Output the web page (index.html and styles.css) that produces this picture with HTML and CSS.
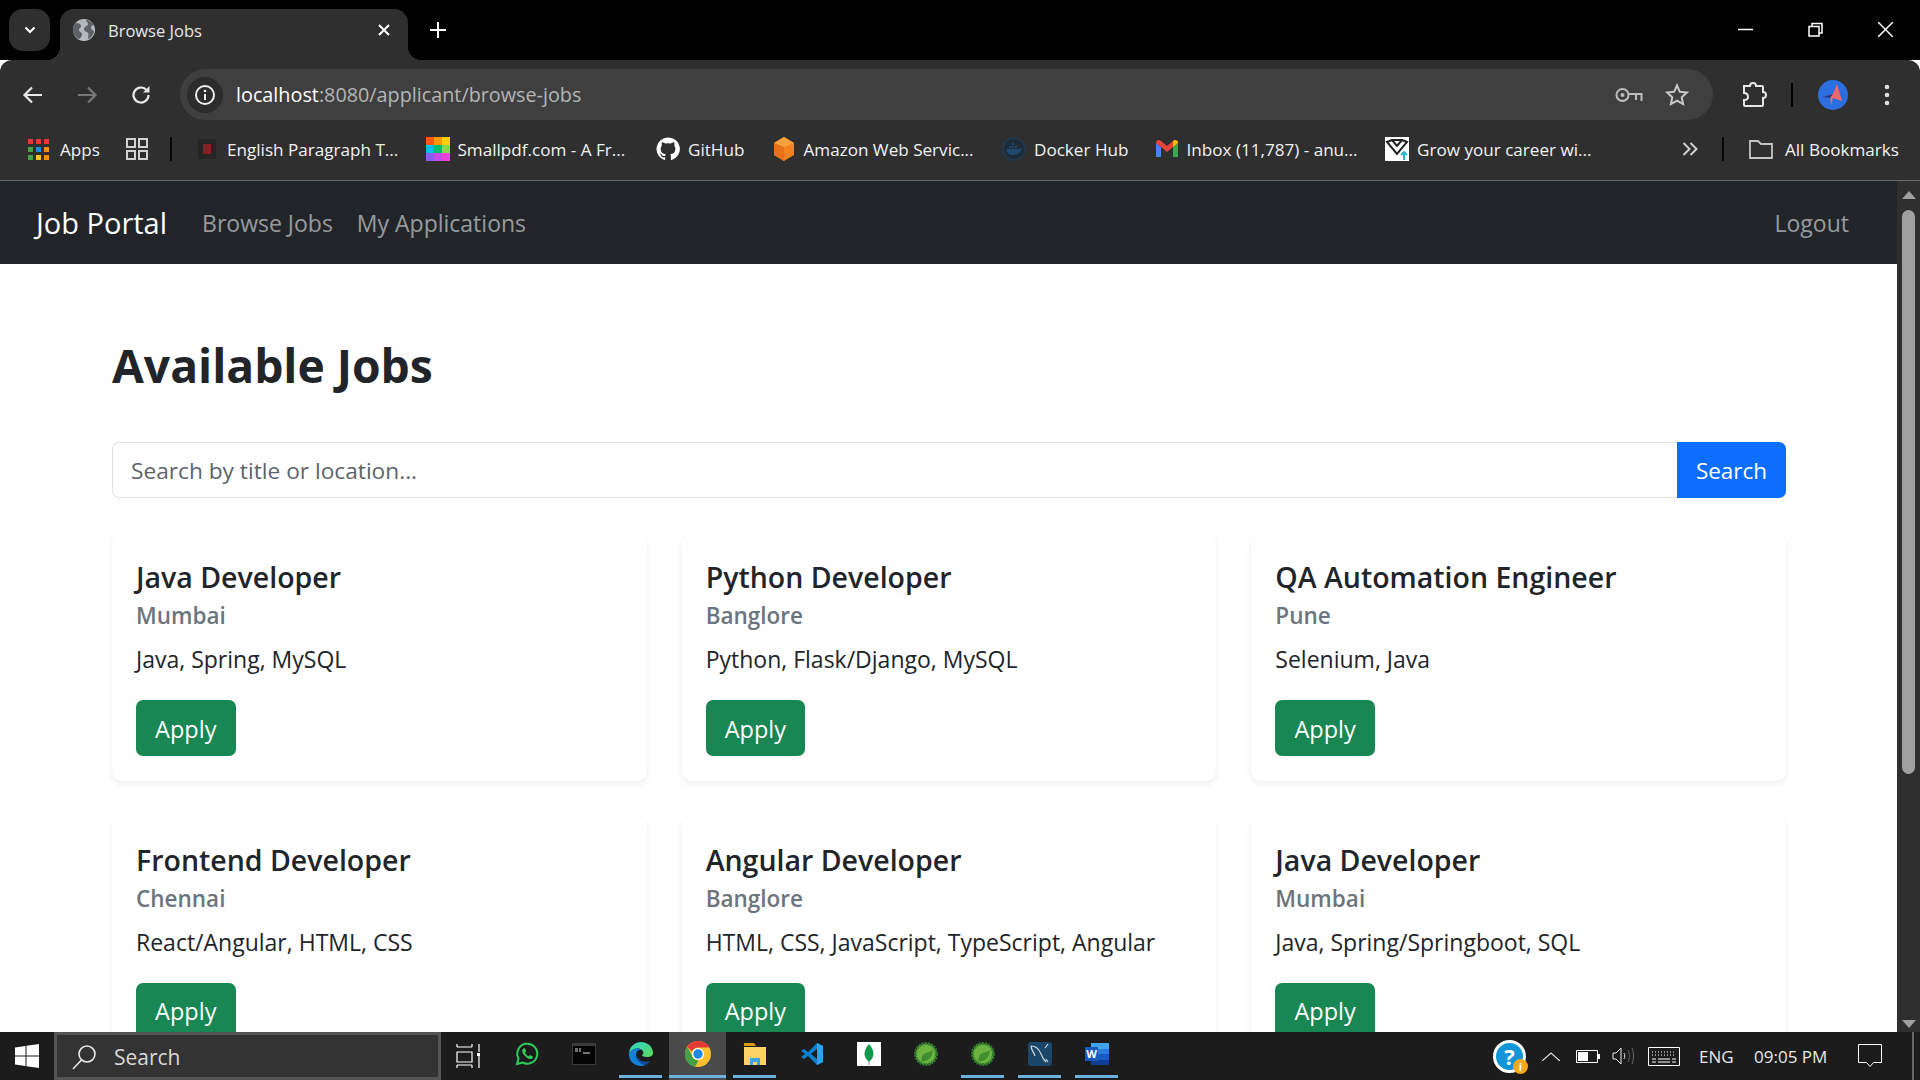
FILE: index.html
```html
<!DOCTYPE html>
<html lang="en">
<head>
<meta charset="utf-8">
<title>Browse Jobs</title>
<link rel="stylesheet" href="styles.css">
</head>
<body>
<header class="titlebar">
  <div class="tab-menu"><svg width="14" height="14" viewBox="0 0 14 14"><path d="M2.5 4.5 7 9l4.500-4.500" fill="none" stroke="#fff" stroke-width="2"/></svg></div>
  <div class="tab">
    <svg width="22" height="22" viewBox="0 0 22 22"><circle cx="11" cy="11" r="11" fill="#b5b8bc"/><path d="M3 4c3 0 5 1 5 3s-2 2-2 4 3 2 3 4-1 4-3 5C2 18 0 14 0 11c0-3 1-5 3-7zM13 1c3 0 6 2 8 5-2 0-3 1-3 3s3 2 3 4c-1 3-3 6-6 7 0-3 1-4 0-6-1-2-4-1-4-4s4-3 4-5-2-2-2-4z" fill="#5d6166"/></svg>
    <span class="tab-title">Browse Jobs</span>
    <svg class="tab-close" width="14" height="14" viewBox="0 0 14 14"><path d="M2 2l10 10M12 2 2 12" stroke="#fff" stroke-width="2"/></svg>
  </div>
  <svg class="new-tab" width="18" height="18" viewBox="0 0 18 18"><path d="M9 1v16M1 9h16" stroke="#fff" stroke-width="2"/></svg>
  <div class="win-controls">
    <svg width="15" height="15" viewBox="0 0 15 15"><path d="M0 7.500h15" stroke="#fff" stroke-width="1.500"/></svg>
    <svg width="15" height="15" viewBox="0 0 15 15"><path d="M1 4.500h10v9.500H1zM4 4.500V1.500h10v9.500h-3" fill="none" stroke="#fff" stroke-width="1.500"/></svg>
    <svg width="15" height="15" viewBox="0 0 15 15"><path d="M0 0l15 15M15 0 0 15" stroke="#fff" stroke-width="1.500"/></svg>
  </div>
</header>

<div class="toolbar">
  <svg class="nav-icon" width="24" height="24" viewBox="0 0 24 24"><path d="M21 12H4M11 4.500 3.500 12l7.500 7.500" fill="none" stroke="#e8e8e8" stroke-width="2.200"/></svg>
  <svg class="nav-icon" width="24" height="24" viewBox="0 0 24 24"><path d="M3 12h17M13 4.500l7.500 7.500-7.500 7.500" fill="none" stroke="#777" stroke-width="2.200"/></svg>
  <svg class="nav-icon" width="24" height="24" viewBox="0 0 24 24"><path d="M19.500 12a7.500 7.500 0 1 1-2.400-5.500" fill="none" stroke="#e8e8e8" stroke-width="2.200"/><path d="M20.500 3v6.500H14z" fill="#e8e8e8"/></svg>
  <div class="omnibox">
    <div class="info-chip"><svg width="22" height="22" viewBox="0 0 22 22"><circle cx="11" cy="11" r="9" fill="none" stroke="#eee" stroke-width="2"/><path d="M11 10v6" stroke="#eee" stroke-width="2"/><circle cx="11" cy="7" r="1.300" fill="#eee"/></svg></div>
    <div class="url"><span class="url-host">localhost</span>:8080/applicant/browse-jobs</div>
    <svg class="omni-key" width="28" height="16" viewBox="0 0 28 16"><circle cx="7.500" cy="8" r="6" fill="none" stroke="#bdbdbd" stroke-width="2"/><circle cx="7.500" cy="8" r="2" fill="#bdbdbd"/><path d="M13 7h13.500v7M21 8v5" fill="none" stroke="#bdbdbd" stroke-width="2"/></svg>
    <svg class="omni-star" width="24" height="24" viewBox="0 0 24 24"><path d="M12 2.500l2.900 6.300 6.900.8-5.100 4.700 1.400 6.800-6.100-3.500-6.100 3.500 1.400-6.800-5.100-4.700 6.900-.8z" fill="none" stroke="#c8c8c8" stroke-width="2"/></svg>
  </div>
  <svg class="puzzle" width="26" height="26" viewBox="0 0 26 26"><path d="M3 4h6c0-4 6-4 6 0h6a1 1 0 0 1 1 1v5c4 0 4 6 0 6v7a1 1 0 0 1-1 1H4a1 1 0 0 1-1-1v-5c3 0 4-1 4-3s-1-4-4-4z" fill="none" stroke="#e4e4e4" stroke-width="2"/></svg>
  <span class="tool-divider"></span>
  <svg class="avatar" width="30" height="30" viewBox="0 0 30 30"><circle cx="15" cy="15" r="15" fill="#2c6fe0"/><path d="M4 17l11-3 4-10 5 17-9-3-2 7-1-8z" fill="#f0696c"/><path d="M4 17l11-3-3 4z" fill="#1c3e94"/></svg>
  <svg class="kebab" width="6" height="22" viewBox="0 0 6 22"><circle cx="3" cy="3" r="2.300" fill="#ddd"/><circle cx="3" cy="11" r="2.300" fill="#ddd"/><circle cx="3" cy="19" r="2.300" fill="#ddd"/></svg>
</div>

<nav class="bookmarks">
  <svg width="21" height="21" viewBox="0 0 21 21"><g><rect width="5" height="5" fill="#e53935"/><rect x="8" width="5" height="5" fill="#e53935"/><rect x="16" width="5" height="5" fill="#e53935"/><rect y="8" width="5" height="5" fill="#43a047"/><rect x="8" y="8" width="5" height="5" fill="#1e88e5"/><rect x="16" y="8" width="5" height="5" fill="#fb8c00"/><rect y="16" width="5" height="5" fill="#43a047"/><rect x="8" y="16" width="5" height="5" fill="#fbc02d"/><rect x="16" y="16" width="5" height="5" fill="#fb8c00"/></g></svg>
  <span class="bm-apps">Apps</span>
  <svg class="bm-groups" width="22" height="22" viewBox="0 0 22 22"><path d="M1 1h8v8H1zM13 1h8v8h-8zM1 13h8v8H1zM13 13h8v8h-8z" fill="none" stroke="#d0d0d0" stroke-width="2"/></svg>
  <span class="bm-divider"></span>
  <div class="bm first">
    <svg width="24" height="24" viewBox="0 0 24 24"><rect x="3" y="2" width="18" height="20" fill="#252525"/><rect x="8" y="7" width="8" height="10" fill="#8e1c24"/></svg>
    <span class="bm-text">English Paragraph T...</span>
  </div>
  <div class="bm">
    <svg width="24" height="24" viewBox="0 0 24 24"><rect width="8" height="8" fill="#ff5a0a"/><rect x="8" width="8" height="8" fill="#ff9a00"/><rect x="16" width="8" height="8" fill="#ffd000"/><rect y="8" width="8" height="8" fill="#00bdf2"/><rect x="8" y="8" width="8" height="8" fill="#0bbd6a"/><rect x="16" y="8" width="8" height="8" fill="#8ad84c"/><rect y="16" width="8" height="8" fill="#8b5cf6"/><rect x="8" y="16" width="8" height="8" fill="#c74be8"/><rect x="16" y="16" width="8" height="8" fill="#f042d8"/></svg>
    <span class="bm-text">Smallpdf.com - A Fr...</span>
  </div>
  <div class="bm">
    <svg width="24" height="24" viewBox="0 0 24 24"><path fill="#fff" d="M12 .5a11.500 11.500 0 0 0-3.640 22.410c.58.110.79-.25.79-.550v-2.050c-3.200.700-3.870-1.370-3.870-1.370-.520-1.330-1.280-1.680-1.280-1.680-1.050-.720.080-.700.080-.700 1.160.080 1.770 1.190 1.770 1.190 1.030 1.760 2.700 1.250 3.360.960.100-.750.400-1.250.730-1.540-2.550-.290-5.240-1.280-5.240-5.690 0-1.260.450-2.280 1.190-3.090-.120-.290-.520-1.460.110-3.050 0 0 .970-.310 3.170 1.180a11 11 0 0 1 5.760 0c2.200-1.490 3.170-1.180 3.170-1.180.630 1.590.230 2.760.110 3.050.740.810 1.190 1.830 1.190 3.090 0 4.420-2.690 5.390-5.260 5.680.410.360.780 1.060.780 2.130v3.160c0 .310.210.670.800.550A11.500 11.500 0 0 0 12 .5z"/></svg>
    <span class="bm-text short">GitHub</span>
  </div>
  <div class="bm">
    <svg width="24" height="24" viewBox="0 0 24 24"><path d="M12 0l10 6v12l-10 6-10-6V6z" fill="#f58220"/><path d="M12 10 2 6l10-6 10 6z" fill="#f9a03f"/><path d="M12 10v14l-10-6V6z" fill="#e8701a"/></svg>
    <span class="bm-text">Amazon Web Servic...</span>
  </div>
  <div class="bm">
    <svg width="24" height="24" viewBox="0 0 24 24"><circle cx="12" cy="12" r="11" fill="#1f2c38" stroke="#1d3c54" stroke-width="1.500"/><path d="M4 12h13c1 0 2-1 3-1-1 4-4 7-9 7-4 0-6-2-7-6z" fill="#1c4a6e"/><path d="M7 9h2v2H7zM10 9h2v2h-2zM13 9h2v2h-2zM10 6h2v2h-2z" fill="#1c4a6e"/></svg>
    <span class="bm-text docker">Docker Hub</span>
  </div>
  <div class="bm">
    <svg width="24" height="24" viewBox="0 0 24 24"><path d="M1 6v14h5V10z" fill="#4285f4"/><path d="M18 10v10h5V6z" fill="#34a853"/><path d="M1 6c0-3 3-4 5-2l6 5 6-5c2-2 5-1 5 2l-5 4-6 5-6-5z" fill="#ea4335"/><path d="M18 4c2-2 5-1 5 2l-5 4z" fill="#fbbc04"/></svg>
    <span class="bm-text">Inbox (11,787) - anu...</span>
  </div>
  <div class="bm">
    <svg width="24" height="24" viewBox="0 0 24 24"><rect width="24" height="24" fill="#fff"/><path d="M2 5l5-2h10l5 2-10 12zM7 3l5 6 5-6" fill="none" stroke="#222" stroke-width="2"/><path d="M19 23v-8M16 18l3-3 3 3" fill="none" stroke="#2bb5c8" stroke-width="2"/></svg>
    <span class="bm-text">Grow your career wi...</span>
  </div>
  <svg class="bm-more" width="16" height="14" viewBox="0 0 16 14"><path d="M1.500 1l6 6-6 6M8.500 1l6 6-6 6" fill="none" stroke="#cfcfcf" stroke-width="2"/></svg>
  <span class="bm-divider right"></span>
  <svg class="bm-folder" width="24" height="20" viewBox="0 0 24 20"><path d="M1 2h8l3 3h11v14H1z" fill="none" stroke="#c4c4c4" stroke-width="1.800"/></svg>
  <span class="bm-all">All Bookmarks</span>
</nav>

<div class="viewport">
  <div class="page">
    <div class="app-nav">
      <a class="brand">Job Portal</a>
      <a class="nav-link">Browse Jobs</a>
      <a class="nav-link">My Applications</a>
      <a class="nav-link logout">Logout</a>
    </div>
    <main class="content">
      <h1 class="heading">Available Jobs</h1>
      <form class="search">
        <div class="search-input">Search by title or location...</div>
        <div class="search-btn">Search</div>
      </form>
      <section class="jobs">
        <article class="card"><h2 class="job-title">Java Developer</h2><h3 class="job-place">Mumbai</h3><p class="job-skills">Java, Spring, MySQL</p><div class="apply">Apply</div></article>
        <article class="card"><h2 class="job-title">Python Developer</h2><h3 class="job-place">Banglore</h3><p class="job-skills">Python, Flask/Django, MySQL</p><div class="apply">Apply</div></article>
        <article class="card"><h2 class="job-title">QA Automation Engineer</h2><h3 class="job-place">Pune</h3><p class="job-skills">Selenium, Java</p><div class="apply">Apply</div></article>
        <article class="card"><h2 class="job-title">Frontend Developer</h2><h3 class="job-place">Chennai</h3><p class="job-skills">React/Angular, HTML, CSS</p><div class="apply">Apply</div></article>
        <article class="card"><h2 class="job-title">Angular Developer</h2><h3 class="job-place">Banglore</h3><p class="job-skills">HTML, CSS, JavaScript, TypeScript, Angular</p><div class="apply">Apply</div></article>
        <article class="card"><h2 class="job-title">Java Developer</h2><h3 class="job-place">Mumbai</h3><p class="job-skills">Java, Spring/Springboot, SQL</p><div class="apply">Apply</div></article>
      </section>
    </main>
  </div>
  <aside class="scrollbar">
    <span class="arrow-up"></span>
    <span class="thumb"></span>
    <span class="arrow-down"></span>
  </aside>
</div>

<footer class="taskbar">
  <svg class="win-logo" width="24" height="24" viewBox="0 0 24 24"><path d="M0 3.500 10.500 2v9.500H0zM11.500 1.800 24 0v11.500H11.500zM0 12.500h10.500V22L0 20.500zM11.500 12.500H24V24l-12.500-1.800z" fill="#fff"/></svg>
  <div class="task-search">
    <svg width="26" height="26" viewBox="0 0 26 26"><circle cx="16" cy="10" r="8" fill="none" stroke="#e8e8e8" stroke-width="1.600"/><path d="M10.500 16 2 25" stroke="#e8e8e8" stroke-width="1.600"/></svg>
    <span>Search</span>
  </div>
  <svg class="task-view" width="24" height="24" viewBox="0 0 24 24"><path d="M1 3h15M1 0v3M16 0v3M1 8h15v10H1zM1 21h15M1 24v-3M16 24v-3M23 0v8M23 12v12" fill="none" stroke="#fff" stroke-width="1.200"/><rect x="21" y="9" width="3" height="3" fill="#fff"/></svg>
  <div class="task-apps">
    <div class="app"><svg width="24" height="24" viewBox="0 0 24 24"><path d="M2 22l1.500-5.500A10 10 0 1 1 7.500 20.500z" fill="none" stroke="#2fcb58" stroke-width="2"/><path d="M8.500 6.500c-2 1.500-1.500 4 .5 6.500s5 4.500 7 4c1.500-.4 2-1.700 1.800-2.600l-2.800-1.400-1.300 1.300c-1.500-.5-3-2-3.700-3.700l1.200-1.300-1.200-3z" fill="#2fcb58"/></svg></div>
    <div class="app"><svg width="24" height="24" viewBox="0 0 24 24"><rect y="1" width="24" height="22" fill="#3a3a3a"/><rect x="1" y="4" width="22" height="18" fill="#050505"/><path d="M3 7h3M3 9h3M7 7h2M7 9h2M11 11h7" stroke="#ddd"/></svg></div>
    <div class="app active-run"><svg width="26" height="26" viewBox="0 0 26 26"><defs><linearGradient id="edgeA" x1="0" y1="0" x2="1" y2="1"><stop offset="0" stop-color="#2ed3c8"/><stop offset="1" stop-color="#5ddc5a"/></linearGradient></defs><path d="M1 12C2 5 7 1 13 1c7 0 12 5 12 11 0 3-3 4-6 4-3 0-5-1-5-2 2-1 2-3 0-5-4-3-10-1-13 3z" fill="url(#edgeA)"/><path d="M1 12c3-4 9-6 13-3-3-1-6 1-6 5 0 4 3 8 9 10-1 1-3 1-4 1C6 25 0 19 1 12z" fill="#1580d8"/><path d="M8 14c0 4 3 8 9 10 2-.5 4-2 5-4-3 1-8 1-10-1-2-2-3-3-4-5z" fill="#0d4f9e"/></svg></div>
    <div class="app active-run current"><svg width="26" height="26" viewBox="0 0 26 26"><circle cx="13" cy="13" r="13" fill="#fbc02d"/><path d="M13 0a13 13 0 0 1 11.300 6.500H13a6.500 6.500 0 0 0-6 4L2.200 5.800A13 13 0 0 1 13 0z" fill="#e53935"/><path d="M2.200 5.800 7.800 16a6.500 6.500 0 0 0 5.700 3.500L10 26A13 13 0 0 1 2.200 5.800z" fill="#43a047"/><circle cx="13" cy="13" r="6" fill="#fff"/><circle cx="13" cy="13" r="4.700" fill="#1e88e5"/></svg></div>
    <div class="app active-run"><svg width="24" height="24" viewBox="0 0 24 24"><path d="M1 1h10l2 3H1z" fill="#d99a0b"/><rect x="1" y="5" width="22" height="18" fill="#fbd263"/><path d="M7 23v-7h10v7h-3v-3h-4v3z" fill="#3ea5e8"/></svg></div>
    <div class="app"><svg width="24" height="24" viewBox="0 0 24 24"><path d="M17 1 8 10 4 7 1 9l4 3-4 3 3 2 4-3 9 9 6-3V4z" fill="#0a7fcf"/><path d="M17 1l6 3v16l-6 3z" fill="#2ba3ee"/><path d="M17 7l-6 5 6 5z" fill="#1c1c1c"/></svg></div>
    <div class="app"><svg width="24" height="24" viewBox="0 0 24 24"><rect width="24" height="24" fill="#fff"/><path d="M12 2c3 3 4.500 7 4.500 10 0 3-2 6-4.500 8-2.500-2-4.500-5-4.500-8 0-3 1.500-7 4.500-10z" fill="#119a4c"/><path d="M12 20v3" stroke="#8a8f8c"/></svg></div>
    <div class="app"><svg width="24" height="24" viewBox="0 0 24 24"><circle cx="12" cy="12" r="10.500" fill="#6cb33f" stroke="#2f7d2f" stroke-width="3" stroke-dasharray="2 1"/><path d="M7 19c7 1 11-3 12-11-4 3-10 2-11 7z" fill="#3f8f2f"/></svg></div>
    <div class="app active-run"><svg width="24" height="24" viewBox="0 0 24 24"><circle cx="12" cy="12" r="10.500" fill="#6cb33f" stroke="#2f7d2f" stroke-width="3" stroke-dasharray="2 1"/><path d="M7 19c7 1 11-3 12-11-4 3-10 2-11 7z" fill="#3f8f2f"/></svg></div>
    <div class="app active-run"><svg width="24" height="24" viewBox="0 0 24 24"><rect width="24" height="24" rx="3" fill="#1c4768"/><path d="M3 4c5 0 8 3 10 8s3 6 5 8M3 4c0 4 3 6 4 10M20 2l-3 4M20 20l-2-3" fill="none" stroke="#cfd8de" stroke-width="1.200"/></svg></div>
    <div class="app active-run"><svg width="24" height="24" viewBox="0 0 24 24"><rect x="6" y="1" width="18" height="22" fill="#2b7cd3"/><rect x="6" y="1" width="18" height="6" fill="#41a5ee"/><rect x="6" y="12" width="18" height="6" fill="#185abd"/><rect x="6" y="18" width="18" height="5" fill="#103f91"/><rect y="5" width="13" height="14" fill="#185abd"/><text class="word-w" x="6.500" y="16">W</text></svg></div>
  </div>
  <div class="tray">
    <div class="help"><span class="help-q">?</span><span class="help-badge">i</span></div>
    <svg class="tray-chev" width="18" height="9" viewBox="0 0 18 9"><path d="M0 9l9-8 9 8" fill="none" stroke="#e0e0e0" stroke-width="1.200"/></svg>
    <svg class="tray-batt" width="24" height="13" viewBox="0 0 24 13"><path d="M.5.500h21v12H.5z" fill="none" stroke="#fff"/><rect x="2" y="2" width="10" height="9" fill="#fff"/><rect x="22" y="4" width="2" height="5" fill="#fff"/></svg>
    <svg class="tray-vol" width="22" height="20" viewBox="0 0 22 20"><path d="M1 7h3l5-5v16l-5-5H1z" fill="none" stroke="#e6e6e6"/><path d="M12 7c1 2 1 4 0 6" fill="none" stroke="#e6e6e6"/><path d="M16 4c2 4 2 8 0 12M20 2c2 5 2 11 0 16" fill="none" stroke="#666"/></svg>
    <svg class="tray-kbd" width="32" height="19" viewBox="0 0 32 19"><path d="M.5.500h31v18H.5z" fill="none" stroke="#fff"/><path d="M4 5h24M4 8h24" stroke="#fff" stroke-dasharray="1 2"/><path d="M4 12h4M10 12h12M24 12h4M4 15h4M10 15h12M24 15h4" stroke="#fff"/></svg>
    <span class="tray-lang">ENG</span>
    <span class="tray-time">09:05 PM</span>
    <svg class="tray-note" width="24" height="24" viewBox="0 0 24 24"><path d="M.5.500h23v18h-8l-3.500 4-3.500-4h-8z" fill="none" stroke="#fff"/></svg>
    <span class="tray-line"></span>
  </div>
</footer>
</body>
</html>
```
FILE: styles.css
```css
* { box-sizing: border-box; }
html, body { margin: 0; height: 100%; }
body {
  display: flex;
  flex-direction: column;
  height: 100vh;
  overflow: hidden;
  font-family: "Open Sans", "Noto Sans", sans-serif;
  background: #fff;
}
svg { flex: none; display: block; }

/* Browser chrome */
.titlebar { height: 60px; flex: none; background: #000; display: flex; align-items: flex-start; }
.tab-menu { width: 41px; height: 42px; margin: 9px 0 0 9px; border-radius: 14px; background: #2f2f2f; display: flex; align-items: center; justify-content: center; }
.tab { position: relative; width: 348px; height: 51px; margin: 9px 0 0 10px; padding: 0 0 9px 13px; background: #2f2f2f; border-radius: 14px 14px 0 0; display: flex; align-items: center; color: #e8e8e8; font-size: 16.500px; }
.tab::before, .tab::after { content: ""; position: absolute; bottom: 0; width: 14px; height: 14px; }
.tab::before { left: -14px; background: radial-gradient(circle at 0 0, #000 14px, #2f2f2f 14.500px); }
.tab::after { right: -14px; background: radial-gradient(circle at 100% 0, #000 14px, #2f2f2f 14.500px); }
.tab-title { margin-left: 13px; width: 269px; }
.new-tab { margin: 21px 0 0 21px; }
.win-controls { margin: 22px 27px 0 auto; display: flex; gap: 55px; }

.toolbar { height: 60px; flex: none; background: #2f2f2f; border-radius: 12px 12px 0 0; display: flex; align-items: flex-end; padding-left: 21px; position: relative; }
.nav-icon { margin: 0 30px 13px 0; }
.nav-icon:nth-of-type(3) { margin-right: 27px; }
.omnibox { width: 1533px; height: 51px; background: #3f3f3f; border-radius: 26px; display: flex; align-items: center; padding: 0 24px 0 7px; }
.info-chip { width: 36px; height: 36px; border-radius: 50%; background: #2c2c2c; display: flex; align-items: center; justify-content: center; }
.url { margin-left: 13px; flex: 1; font-size: 19.800px; color: #b5b5b5; }
.url-host { color: #fff; }
.omni-star { margin-left: 22px; }
.puzzle { margin: 0 0 12px 28px; }
.tool-divider { width: 2px; height: 24px; background: #000; margin: 0 0 13px 24px; }
.avatar { margin: 0 0 10px 25px; }
.kebab { margin: 0 0 14px 36px; }

.bookmarks { height: 61px; flex: none; background: #2f2f2f; border-bottom: 1px solid #6a6a6a; display: flex; align-items: center; padding: 0 22px 2px 28px; color: #f2f2f2; font-size: 17.100px; white-space: nowrap; }
.bm-apps { margin-left: 11px; width: 40px; }
.bm-groups { margin-left: 26px; }
.bm-divider { width: 2px; height: 24px; background: #050505; margin-left: 22px; }
.bm-divider.right { margin-left: 24px; }
.bm { display: flex; align-items: center; gap: 8px; margin-left: 26.500px; }
.bm.first { margin-left: 23px; }
.bm-text { width: 172px; }
.bm-text.short { width: 57px; }
.bm-text.docker { width: 94px; }
.bm-more { margin-left: auto; }
.bm-folder { margin-left: 25px; }
.bm-all { margin-left: 12px; width: 113px; }

/* Page */
.viewport { flex: 1; min-height: 0; display: flex; }
.page { flex: 1; min-width: 0; overflow: hidden; background: #fff; }
.app-nav { height: 83px; background: #212529; display: flex; align-items: center; padding: 0 48px 0 36px; }
.brand { color: #fff; font-size: 29px; margin-right: 35px; }
.nav-link { color: rgba(255,255,255,.55); font-size: 23px; margin-right: 24px; }
.logout { margin: 0 0 0 auto; }
.content { padding: 75px 111px 0 112px; }
.heading { margin: 0; font-size: 46.200px; line-height: 53px; font-weight: 700; color: #212529; }
.search { margin-top: 50px; display: flex; height: 56px; }
.search-input { flex: 1; border: 1px solid #dee2e6; border-right: 0; border-radius: 7px 0 0 7px; padding: 1px 18px 0; display: flex; align-items: center; font-size: 22.700px; color: #5c636a; }
.search-btn { width: 109px; background: #0d6efd; color: #fff; border-radius: 0 7px 7px 0; display: flex; align-items: center; justify-content: center; font-size: 22.500px; }
.jobs { margin-top: 36px; display: grid; grid-template-columns: repeat(3, 1fr); gap: 35.500px 35px; }
.card { height: 247px; border-radius: 10px; background: #fff; box-shadow: 0 3px 6px rgba(0,0,0,.075); padding: 20px 24px; }
.job-title { margin: 0; font-size: 28.500px; line-height: 47px; font-weight: 600; color: #212529; }
.job-place { margin: 0; font-size: 22.500px; line-height: 30px; font-weight: 600; color: #6c757d; }
.job-skills { margin: 13px 0 0; font-size: 23px; line-height: 30px; color: #212529; }
.apply { margin-top: 26px; width: 99.500px; height: 56px; padding-top: 1px; background: #198754; color: #fff; border-radius: 7px; display: flex; align-items: center; justify-content: center; font-size: 23.500px; }

.scrollbar { width: 23px; flex: none; background: #2f2f2f; display: flex; flex-direction: column; align-items: center; padding: 10px 0 4px; }
.arrow-up { width: 0; height: 0; border: 7px solid transparent; border-top: 0; border-bottom: 8px solid #a0a0a0; }
.thumb { width: 13px; height: 564px; margin-top: 11px; border-radius: 7px; background: #9f9f9f; }
.arrow-down { width: 0; height: 0; margin-top: auto; border: 7px solid transparent; border-bottom: 0; border-top: 8px solid #a0a0a0; }

/* Windows taskbar */
.taskbar { height: 48px; flex: none; background: #1c1c1c; display: flex; align-items: center; padding-left: 15px; }
.task-search { margin-left: 15px; width: 387px; height: 48px; background: #333; border: 3px solid #555; display: flex; align-items: center; gap: 17px; padding: 1px 0 0 14px; color: #d8d8d8; font-size: 21px; }
.task-view { margin-left: 15px; }
.task-apps { margin-left: 18px; display: flex; }
.app { position: relative; width: 57px; height: 48px; display: flex; align-items: center; justify-content: center; padding-bottom: 4px; }
.app.current { background: #4a4a4a; }
.active-run::after { content: ""; position: absolute; left: 7px; right: 7px; bottom: 2px; height: 3px; background: #6cb0de; }
.current::after { left: 0; right: 0; }
.word-w { font: 700 11px "Open Sans", sans-serif; fill: #fff; text-anchor: middle; }
.tray { margin-left: auto; display: flex; align-items: center; padding-right: 6px; height: 48px; color: #e8e8e8; font-size: 18px; }
.help { position: relative; width: 33px; height: 33px; border-radius: 50%; background: #1396d8; border: 3px solid #fff; display: flex; align-items: center; justify-content: center; color: #fff; font-weight: 700; font-size: 22px; }
.help-badge { position: absolute; right: -5px; bottom: -4px; width: 15px; height: 15px; border-radius: 50%; background: #f4a81c; color: #fff; font-size: 11px; line-height: 15px; text-align: center; }
.tray-chev { margin-left: 16px; }
.tray-batt { margin-left: 16px; }
.tray-vol { margin-left: 12px; }
.tray-kbd { margin-left: 14px; }
.tray-lang { margin-left: 19px; width: 34px; font-size: 17px; }
.tray-time { margin-left: 21px; width: 75px; font-size: 17px; white-space: nowrap; }
.tray-note { margin-left: 29px; }
.tray-line { margin-left: 30px; width: 2px; height: 48px; background: #666; }
```
